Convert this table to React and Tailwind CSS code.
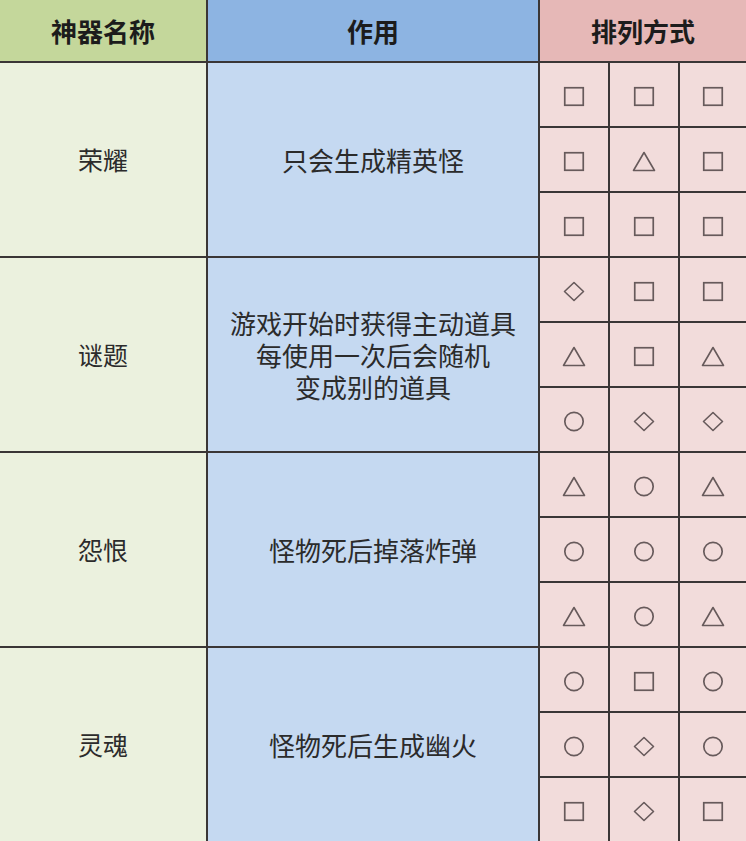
import React from "react"

const font = { fontFamily: '"Noto Sans CJK SC", "Noto Sans", sans-serif' }

const Shape = ({ kind }) => {
  const stroke = "#675a5b"
  return (
    <svg width="24" height="22" viewBox="0 0 24 22" className="mt-[4px]">
      {kind === "s" && <rect x="2.75" y="1.75" width="18.5" height="17.5" fill="none" stroke={stroke} strokeWidth="1.7" />}
      {kind === "t" && <polygon points="12,1.5 22.5,19.5 1.5,19.5" fill="none" stroke={stroke} strokeWidth="1.6" strokeLinejoin="round" />}
      {kind === "d" && <polygon points="12,1.5 21.5,10.5 12,19.5 2.5,10.5" fill="none" stroke={stroke} strokeWidth="1.6" strokeLinejoin="round" />}
      {kind === "c" && <circle cx="12" cy="10.5" r="9.2" fill="none" stroke={stroke} strokeWidth="1.7" />}
    </svg>
  )
}

const groups = [
  { name: "荣耀", effect: ["只会生成精英怪"], grid: ["sss", "sts", "sss"] },
  { name: "谜题", effect: ["游戏开始时获得主动道具", "每使用一次后会随机", "变成别的道具"], grid: ["dss", "tst", "cdd"] },
  { name: "怨恨", effect: ["怪物死后掉落炸弹"], grid: ["tct", "ccc", "tct"] },
  { name: "灵魂", effect: ["怪物死后生成幽火"], grid: ["csc", "cdc", "sds"] },
]

const rowStart = ["row-start-2", "row-start-5", "row-start-8", "row-start-11"]

export default function App() {
  return (
    <div style={font} className="w-[746px] h-[841px] overflow-hidden bg-[#3a3636]">
      <div className="grid grid-cols-[206px_330px_68px_68px_66px] grid-rows-[61px_repeat(12,63px)] gap-[2px] text-[#2b2b2b]">

        {/* header */}
        <div className="bg-[#c4d79b] flex items-center justify-center text-[26px] font-bold text-[#1c1c1c]">神器名称</div>
        <div className="bg-[#8db4e2] flex items-center justify-center text-[26px] font-bold text-[#1c1c1c]">作用</div>
        <div className="col-span-3 bg-[#e6b8b7] flex items-center justify-center text-[26px] font-bold text-[#1c1c1c]">排列方式</div>

        {groups.map((g, gi) => (
          <React.Fragment key={g.name}>
            <div className={`col-start-1 row-span-3 ${rowStart[gi]} bg-[#ebf1de] flex items-center justify-center text-[25px]`}>
              {g.name}
            </div>
            <div className={`col-start-2 row-span-3 ${rowStart[gi]} bg-[#c5d9f1] flex flex-col items-center justify-center text-[26px] leading-[32px]`}>
              {g.effect.map((l) => <span key={l}>{l}</span>)}
            </div>
            {g.grid.map((row, ri) =>
              row.split("").map((k, ci) => (
                <div key={`${gi}-${ri}-${ci}`} className="bg-[#f2dcdb] flex items-center justify-center">
                  <Shape kind={k} />
                </div>
              ))
            )}
          </React.Fragment>
        ))}
      </div>
    </div>
  )
}
